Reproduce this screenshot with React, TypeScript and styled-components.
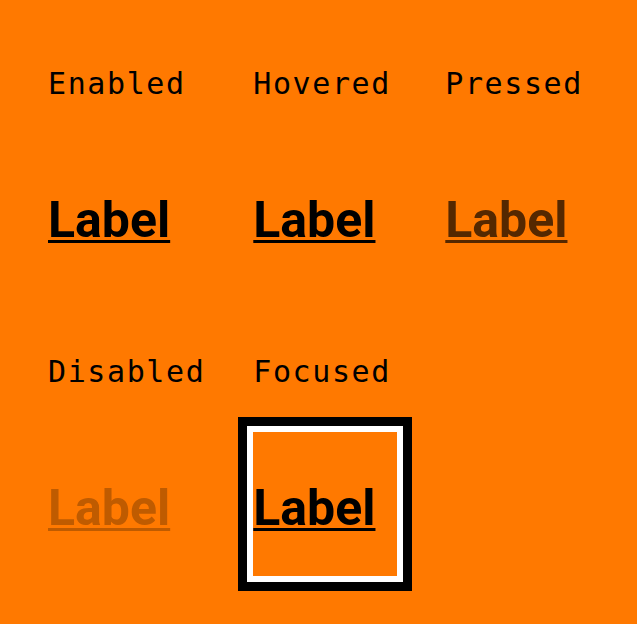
import React from "react";
import styled, { createGlobalStyle, css } from "styled-components";

const GlobalStyle = createGlobalStyle`
  html, body {
    margin: 0;
    padding: 0;
    background: #ff7900;
  }
`;

type LinkState = "enabled" | "hovered" | "pressed" | "disabled" | "focused";

const states: { title: string; state: LinkState }[] = [
  { title: "Enabled", state: "enabled" },
  { title: "Hovered", state: "hovered" },
  { title: "Pressed", state: "pressed" },
  { title: "Disabled", state: "disabled" },
  { title: "Focused", state: "focused" },
];

const App = () => {
  const rows = [states.slice(0, 3), states.slice(3)];
  return (
    <>
      <GlobalStyle />
      <Page>
        {rows.map((row, i) => (
          <React.Fragment key={i}>
            {row.map((s) => (
              <Caption key={s.title}>{s.title}</Caption>
            ))}
            {row.length < 3 && <span />}
            {row.map((s) => (
              <Cell key={s.title + "-cell"} state={s.state}>
                <LinkText state={s.state}>Label</LinkText>
              </Cell>
            ))}
            {row.length < 3 && <span />}
          </React.Fragment>
        ))}
      </Page>
    </>
  );
};

const Page = styled.div`
  background: #ff7900;
  padding: 48px;
  display: grid;
  grid-template-columns: auto auto auto;
  justify-content: start;
  column-gap: 48px;
  row-gap: 48px;
  min-height: 624px;
  box-sizing: border-box;
`;

// caption text sits low in its 48px slot
const Caption = styled.div`
  font-family: "DejaVu Sans Mono", monospace;
  font-size: 30px;
  letter-spacing: 1.6px;
  line-height: 72px;
  height: 48px;
  color: #000;
  white-space: nowrap;
`;

const Cell = styled.div<{ state: LinkState }>`
  box-sizing: border-box;
  min-width: 144px;
  height: 144px;
  padding-top: 7px;
  display: flex;
  align-items: center;
  justify-content: flex-start;
  ${({ state }) =>
    state === "focused" &&
    css`
      width: 144px;
      box-shadow: 0 0 0 6px #fff, 0 0 0 15px #000;
    `}
`;

const LinkText = styled.span<{ state: LinkState }>`
  font-family: Roboto, "Liberation Sans", sans-serif;
  font-weight: 700;
  font-size: 50px;
  line-height: 1;
  text-decoration: underline;
  text-decoration-thickness: 3px;
  text-underline-offset: 3px;
  color: ${({ state }) =>
    state === "pressed"
      ? "#552800"
      : state === "disabled"
      ? "#bf5b00"
      : "#000"};
`;

export default App;
